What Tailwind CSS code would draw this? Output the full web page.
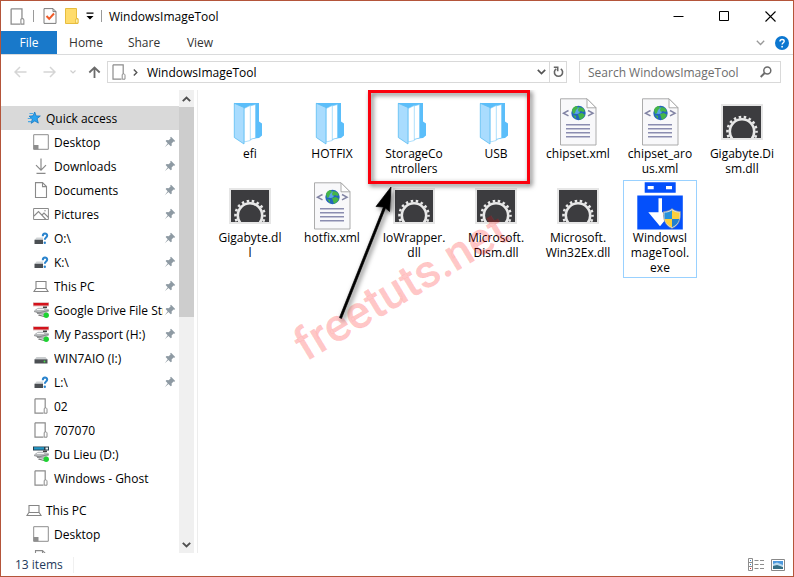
<!DOCTYPE html>
<html lang="en">
<head>
<meta charset="utf-8">
<meta name="viewport" content="width=device-width, initial-scale=1">
<title>WindowsImageTool</title>
<script src="https://cdn.jsdelivr.net/npm/@tailwindcss/browser@4"></script>
</head>
<body class="h-screen overflow-hidden bg-white font-['Open_Sans','Noto_Sans',sans-serif] text-[12px] leading-[15px] text-black">

<svg class="hidden" aria-hidden="true">
  <symbol id="folder-sm" viewBox="0 0 14 16"><path d="M1 .8h10.2v9.4M9.500 15.200H1V.8" fill="none" stroke="#8c8c8c" stroke-width="1.200"/><path d="M10.200 10.500l1.200-.6c1 0 1.600.5 1.600 1.300v4h-2.800z" fill="#fff" stroke="#8c8c8c"/></symbol>
  <symbol id="pin" viewBox="0 0 12 12"><path d="M7 .8l4.200 4.200-.9.7-.8-.3-1.900 2 .2 2-1 .9L4.400 8 .8 11.200 3.700 7.300 1.600 5l1-.9 2 .2 2-1.900-.4-.8z" fill="#8e9aa3"/></symbol>
  <symbol id="desktop" viewBox="0 0 16 16"><path d="M.7.700h14.600v14.600H.7z" fill="#fff" stroke="#8e8e8e"/><path d="M.5 11h5v4.500h-5z" fill="#8e8e8e"/></symbol>
  <symbol id="download" viewBox="0 0 16 16"><path d="M8 .5v11.500M3 7.200l5 5 5-5M3.500 15.300h9" fill="none" stroke="#8a8a8a" stroke-width="1.200"/></symbol>
  <symbol id="document" viewBox="0 0 16 16"><path d="M2.500.600h7l4 4v10.900h-11zM9.500.600v4h4" fill="#fff" stroke="#8a8a8a" stroke-width="1.100"/></symbol>
  <symbol id="pictures" viewBox="0 0 16 16"><path d="M.6 2.500h14.800v11H.6z" fill="#fff" stroke="#8a8a8a"/><path d="M1 10l4.500-4.500 7.500 8M9 9l2-2 4.500 4.500" fill="none" stroke="#8a8a8a" stroke-width="1.100"/><circle cx="12" cy="4.800" r=".7" fill="#8a8a8a"/></symbol>
  <symbol id="laptop" viewBox="0 0 16 16"><path d="M3 3.500h10v7H3zM2.700 10.800l-1.700 2.700h14l-1.700-2.700" fill="#fff" stroke="#858585" stroke-width="1.100"/></symbol>
  <symbol id="drive" viewBox="0 0 16 16"><path d="M3.500 7h9l2 2.500H1.500z" fill="#c9ccce"/><path d="M1.500 9.300h13v4.200h-13z" fill="#4b4f53"/><circle cx="11.500" cy="11.500" r=".9" fill="#4be04b"/></symbol>
  <symbol id="drive-q" viewBox="0 0 16 16"><path d="M3.500 7.500h6.500v2.500H1.500z" fill="#d2d5d7"/><path d="M1.500 9.800h8.500v4.200H1.500z" fill="#4b4f53"/><path d="M9.800 6.200C9.800 2.700 14.200 3 14.200 5.600c0 2-2.400 2-2.400 4.200" fill="none" stroke="#2b84cd" stroke-width="2"/><circle cx="11.800" cy="12.700" r="1.200" fill="#2b84cd"/></symbol>
  <symbol id="netbase" viewBox="0 0 16 16"><path d="M1 8.500l4-2.700h7l4 1.700v2l-5 2.300H5z" fill="#b9bcbe"/><path d="M1 9.500l5 1.300 9.500-2.300M4 11.500l7 .8" fill="none" stroke="#77797b" stroke-width=".8"/><path d="M4 7.500h7" stroke="#f5f5f5"/><path d="M10 4.500h4v1.500h-4z" fill="#444"/><path d="M6 12.500l5 1.500v1l-6-1.600z" fill="#777"/><circle cx="13.200" cy="13.200" r="2.700" fill="#1ed232"/></symbol>
  <symbol id="net-red" viewBox="0 0 16 16"><path d="M0 0h16v4.500H0z" fill="#e3c4c4"/><path d="M.5 1h15v2.500H.5z" fill="#d3121b"/><use href="#netbase"/></symbol>
  <symbol id="net-blue" viewBox="0 0 16 16"><path d="M0 .5h16v4H0z" fill="#263e4c"/><path d="M1 1.200h10v2.400H1z" fill="#2496c4"/><path d="M12.500 1.500h2.500v2h-2.500z" fill="#e9f0f3"/><use href="#netbase"/></symbol>
  <symbol id="folder" viewBox="0 0 48 48"><path d="M8 5h25v18.500l3 2v12L33 40l-9 1z" fill="#5bbefa"/><path d="M20 8l12-2.500V7l-2.500 33-6 2z" fill="#5bbefa"/><path d="M22 8.500l7.500-2V40l-6 1.500z" fill="#fff" stroke="#79c9f8" stroke-width=".6"/><path d="M18 10.500l6.300-3V42.500L18 44z" fill="#fff" stroke="#79c9f8" stroke-width=".6"/><path d="M8.300 5.300L18 9.500V46L8.300 39.500z" fill="#a9dcfe" stroke="#5bbcf2" stroke-width=".8"/></symbol>
  <symbol id="dll" viewBox="0 0 48 48"><path d="M3 6h42v36H3z" fill="#e6e6e6"/><path d="M5 8h38v32H5z" fill="#3c3c3f"/><svg x="5" y="8" width="38" height="32" viewBox="5 8 38 32"><circle cx="24" cy="33.500" r="12.200" fill="none" stroke="#e8e8e8" stroke-width="2.600"/><circle cx="24" cy="33.500" r="14.500" fill="none" stroke="#e8e8e8" stroke-width="2.600" stroke-dasharray="2.500 2.560" stroke-dashoffset="1.200"/></svg></symbol>
  <symbol id="xml" viewBox="0 0 48 48"><path d="M6.500.8h26.500l9 9V47H6.500z" fill="#f8f8fa" stroke="#a3a3a3" stroke-width=".9"/><path d="M33 .8v9h9z" fill="#fff" stroke="#a3a3a3" stroke-width=".9"/><path d="M14.500 12.500l-5 2.700 5 2.700M34 12.500l5 2.700-5 2.700" fill="none" stroke="#8284a4" stroke-width="1.500"/><circle cx="24.500" cy="15" r="7.200" fill="#2465bd"/><circle cx="22.500" cy="12.500" r="3.500" fill="#5aa5e6"/><path d="M18 12c1-3 3-4 5-4l1 2-2 2-1 3-2 1zM25 9l4 1 2 3-2 1-2-1-2 1-1-2zM24 16l4-1 3 2-2 3-3 2-1-3zM19 17l3 1v3z" fill="#45b548"/><path d="M12 26.700h24M12 30.700h24M12 34.700h24M12 38.700h24" stroke="#8b8db0" stroke-width="1.600"/></symbol>
  <symbol id="exe" viewBox="0 0 48 48"><path d="M8.700.300h31v10.500h-31zM1.300 13.500h45.500v34H1.300z" fill="#0450fb"/><path d="M11.700 4h6v3.300h-6zM30 4h6v3.300h-6zM22.500 16.300H26v14h9.500L24 44.300 12.300 30.300h10.200z" fill="#fff"/><path d="M36 26.500c3 2.300 5.500 3 8.500 3 .5 8-1.500 14-8.500 17-7-3-9-9-8.500-17 3 0 5.500-.7 8.500-3z" fill="#d6dbe0" stroke="#77818b" stroke-width=".6"/><path d="M36 28.200V37h-7.300c-.3-2-.3-4-.2-6.500 3 0 5.500-.8 7.500-2.300z" fill="#2793dc"/><path d="M36 28.200c2 1.500 4.500 2.300 7.500 2.300.1 2.500 0 4.500-.3 6.500H36zM28.700 37H36v8.300c-4-1.800-6.500-4.500-7.300-8.300z" fill="#fbcf3b"/><path d="M36 37h7.200c-.8 3.800-3.200 6.500-7.200 8.300z" fill="#2280cf"/></symbol>
</svg>

<div class="flex h-full flex-col border border-[#b4553a]">
  <header class="flex h-[30px] shrink-0 items-center pl-[9px]">
    <svg class="h-[17px] w-[15px]"><use href="#folder-sm"/></svg>
    <span class="ml-[8px] h-[12px] w-px bg-[#9a9a9a]"></span>
    <button aria-label="Properties" class="ml-[9px]"><svg class="h-[16px] w-[14px]" viewBox="0 0 14 16"><path d="M1 .6h9l3 3v11.800H1zM10 .6v3h3" fill="#fdfdfd" stroke="#7c7c7c"/><path d="M3.500 8l2.700 2.800L11 5.500" fill="none" stroke="#ef5a28" stroke-width="2"/></svg></button>
    <button aria-label="New folder" class="ml-[8px]"><svg class="h-[16px] w-[14px]" viewBox="0 0 14 16"><path d="M.5.500h11v10h1.500v5H.5z" fill="#ffdc6b" stroke="#e7bd3e"/><path d="M10.500 11h2.500v4h-2.500z" fill="#fff0ad" stroke="#e7bd3e" stroke-width=".8"/></svg></button>
    <button aria-label="Customize Quick Access Toolbar" class="ml-[7px]"><svg class="h-[8px] w-[8px]" viewBox="0 0 8 8"><path d="M.5.5h7v1.200h-7zM.5 4h7L4 7.500z"/></svg></button>
    <span class="ml-[7px] h-[12px] w-px bg-[#9a9a9a]"></span>
    <h1 class="ml-[7px] flex-1">WindowsImageTool</h1>
    <button aria-label="Minimize" class="flex h-full w-[45px] items-center justify-center"><svg class="h-[11px] w-[11px]" viewBox="0 0 11 11"><path d="M.5 5h10v1H.5z"/></svg></button>
    <button aria-label="Maximize" class="flex h-full w-[46px] items-center justify-center"><svg class="h-[10px] w-[10px]" viewBox="0 0 10 10"><path d="M.5.500h9v9h-9z" fill="none" stroke="#000"/></svg></button>
    <button aria-label="Close" class="flex h-full w-[46px] items-center justify-center"><svg class="h-[11px] w-[11px]" viewBox="0 0 11 11"><path d="M.5.500l10 10M10.500.500l-10 10" stroke="#000" stroke-width="1.100"/></svg></button>
  </header>

  <nav aria-label="Ribbon" class="flex h-[24px] shrink-0 items-stretch border-b border-[#dadbdc] text-[#333]">
    <button class="w-[56px] bg-[#1979ca] text-white">File</button>
    <button class="w-[58px]">Home</button>
    <button class="w-[58px]">Share</button>
    <button class="w-[54px]">View</button>
    <button aria-label="Expand the Ribbon" class="ml-auto px-[10px]"><svg class="h-[6px] w-[9px]" viewBox="0 0 9 6"><path d="M.8.800l3.700 3.700L8.200.8" fill="none" stroke="#999" stroke-width="1.300"/></svg></button>
    <button aria-label="Help" class="mr-[4px]"><svg class="h-[14px] w-[14px]" viewBox="0 0 14 14"><circle cx="7" cy="7" r="7" fill="#0c77d0"/><path d="M5 5.600C5 2.600 9.200 3 9.200 5.200 9.200 6.800 7.100 6.800 7.100 8.600" fill="none" stroke="#fff" stroke-width="1.400"/><circle cx="7.100" cy="10.700" r=".9" fill="#fff"/></svg></button>
  </nav>

  <div class="flex h-[34px] shrink-0 items-center pr-[12px]">
    <button aria-label="Back" class="ml-[13px]"><svg class="h-[12px] w-[13px]" viewBox="0 0 13 12"><path d="M12.500 6H1M6 1L1 6l5 5" fill="none" stroke="#d5d5d5" stroke-width="1.500"/></svg></button>
    <button aria-label="Forward" class="ml-[16px]"><svg class="h-[12px] w-[13px]" viewBox="0 0 13 12"><path d="M.5 6H12M7 1l5 5-5 5" fill="none" stroke="#d5d5d5" stroke-width="1.500"/></svg></button>
    <button aria-label="Recent locations" class="ml-[14px]"><svg class="h-[4px] w-[6px]" viewBox="0 0 6 4"><path d="M.5.500L3 3 5.500.5" fill="none" stroke="#cfcfcf" stroke-width="1.200"/></svg></button>
    <button aria-label="Up" class="ml-[12px]"><svg class="h-[12px] w-[13px]" viewBox="0 0 13 12"><path d="M6.500 12V1.500M1.300 6.500l5.200-5 5.200 5" fill="none" stroke="#6b6b6b" stroke-width="1.800"/></svg></button>
    <div class="ml-[6px] flex h-[22px] flex-1 items-center border border-[#d9d9d9] pl-[4px]">
      <svg class="h-[16px] w-[14px]"><use href="#folder-sm"/></svg>
      <svg class="ml-[7px] h-[7px] w-[5px]" viewBox="0 0 5 7"><path d="M.8.500l3 3-3 3" fill="none" stroke="#555" stroke-width="1.400"/></svg>
      <button class="ml-[9px]">WindowsImageTool</button>
      <button aria-label="Previous locations" class="ml-auto mr-[3px]"><svg class="h-[6px] w-[9px]" viewBox="0 0 9 6"><path d="M.8.800l3.700 3.700L8.200.8" fill="none" stroke="#555" stroke-width="1.700"/></svg></button>
      <button aria-label="Refresh" class="flex h-full w-[17px] items-center justify-center border-l border-[#d9d9d9]"><svg class="h-[12px] w-[11px]" viewBox="0 0 11 12"><path d="M7.800 2.800a4.100 4.100 0 1 1-4.600 0M.8 1.300h3.900v4" fill="none" stroke="#666" stroke-width="1.600"/></svg></button>
    </div>
    <label class="ml-[12px] flex h-[22px] w-[202px] items-center border border-[#d9d9d9] pl-[8px] pr-[8px]">
      <input type="search" aria-label="Search WindowsImageTool" placeholder="Search WindowsImageTool" class="w-0 flex-1 bg-transparent outline-none placeholder:text-[#6d6d6d]">
      <svg class="h-[12px] w-[12px]" viewBox="0 0 12 12"><circle cx="7.300" cy="4.500" r="3.500" fill="none" stroke="#6b6b6b" stroke-width="1.500"/><path d="M4.700 7L.7 11" stroke="#6b6b6b" stroke-width="1.900"/></svg>
    </label>
  </div>

  <div class="flex min-h-0 flex-1 pt-px">
    <aside class="flex w-[197px] shrink-0 border-r border-[#ededed] pr-[3px]">
      <nav aria-label="Folders" class="min-w-0 flex-1 overflow-hidden pt-[16px]">
        <a href="#" class="flex h-[24px] items-center gap-[4px] bg-[#d9d9d9] pl-[25px]"><svg class="h-[16px] w-[16px]" viewBox="0 0 16 16"><path d="M8.700 2l1.400 3.900 4.200.1-3.200 2.700 1.200 4.400-3.500-2.200L5.200 13.300l1.100-4.300L3.100 6.200l4-.4z" fill="#2ba3ef" stroke="#1678c3" stroke-width=".8"/><path d="M3.500 3.500h3.500M1.800 8.500h3.500M2 11.700h3" stroke="#4aa9e5" stroke-width="1.200"/></svg>Quick access</a>
        <a href="#" class="flex h-[24px] items-center pl-[32px] pr-[3px]"><svg class="mr-[5px] h-[16px] w-[16px] shrink-0"><use href="#desktop"/></svg><span class="min-w-0 flex-1 overflow-hidden whitespace-nowrap">Desktop</span><svg class="ml-px h-[12px] w-[12px] shrink-0"><use href="#pin"/></svg></a>
        <a href="#" class="flex h-[24px] items-center pl-[32px] pr-[3px]"><svg class="mr-[5px] h-[16px] w-[16px] shrink-0"><use href="#download"/></svg><span class="min-w-0 flex-1 overflow-hidden whitespace-nowrap">Downloads</span><svg class="ml-px h-[12px] w-[12px] shrink-0"><use href="#pin"/></svg></a>
        <a href="#" class="flex h-[24px] items-center pl-[32px] pr-[3px]"><svg class="mr-[5px] h-[16px] w-[16px] shrink-0"><use href="#document"/></svg><span class="min-w-0 flex-1 overflow-hidden whitespace-nowrap">Documents</span><svg class="ml-px h-[12px] w-[12px] shrink-0"><use href="#pin"/></svg></a>
        <a href="#" class="flex h-[24px] items-center pl-[32px] pr-[3px]"><svg class="mr-[5px] h-[16px] w-[16px] shrink-0"><use href="#pictures"/></svg><span class="min-w-0 flex-1 overflow-hidden whitespace-nowrap">Pictures</span><svg class="ml-px h-[12px] w-[12px] shrink-0"><use href="#pin"/></svg></a>
        <a href="#" class="flex h-[24px] items-center pl-[32px] pr-[3px]"><svg class="mr-[5px] h-[16px] w-[16px] shrink-0"><use href="#drive-q"/></svg><span class="min-w-0 flex-1 overflow-hidden whitespace-nowrap">O:\</span><svg class="ml-px h-[12px] w-[12px] shrink-0"><use href="#pin"/></svg></a>
        <a href="#" class="flex h-[24px] items-center pl-[32px] pr-[3px]"><svg class="mr-[5px] h-[16px] w-[16px] shrink-0"><use href="#drive-q"/></svg><span class="min-w-0 flex-1 overflow-hidden whitespace-nowrap">K:\</span><svg class="ml-px h-[12px] w-[12px] shrink-0"><use href="#pin"/></svg></a>
        <a href="#" class="flex h-[24px] items-center pl-[32px] pr-[3px]"><svg class="mr-[5px] h-[16px] w-[16px] shrink-0"><use href="#laptop"/></svg><span class="min-w-0 flex-1 overflow-hidden whitespace-nowrap">This PC</span><svg class="ml-px h-[12px] w-[12px] shrink-0"><use href="#pin"/></svg></a>
        <a href="#" class="flex h-[24px] items-center pl-[32px] pr-[3px]"><svg class="mr-[5px] h-[16px] w-[16px] shrink-0"><use href="#net-red"/></svg><span class="min-w-0 flex-1 overflow-hidden whitespace-nowrap">Google Drive File Stream</span><svg class="ml-px h-[12px] w-[12px] shrink-0"><use href="#pin"/></svg></a>
        <a href="#" class="flex h-[24px] items-center pl-[32px] pr-[3px]"><svg class="mr-[5px] h-[16px] w-[16px] shrink-0"><use href="#net-red"/></svg><span class="min-w-0 flex-1 overflow-hidden whitespace-nowrap">My Passport (H:)</span><svg class="ml-px h-[12px] w-[12px] shrink-0"><use href="#pin"/></svg></a>
        <a href="#" class="flex h-[24px] items-center pl-[32px] pr-[3px]"><svg class="mr-[5px] h-[16px] w-[16px] shrink-0"><use href="#drive"/></svg><span class="min-w-0 flex-1 overflow-hidden whitespace-nowrap">WIN7AIO (I:)</span><svg class="ml-px h-[12px] w-[12px] shrink-0"><use href="#pin"/></svg></a>
        <a href="#" class="flex h-[24px] items-center pl-[32px] pr-[3px]"><svg class="mr-[5px] h-[16px] w-[16px] shrink-0"><use href="#drive-q"/></svg><span class="min-w-0 flex-1 overflow-hidden whitespace-nowrap">L:\</span><svg class="ml-px h-[12px] w-[12px] shrink-0"><use href="#pin"/></svg></a>
        <a href="#" class="flex h-[24px] items-center pl-[32px]"><svg class="mr-[5px] h-[16px] w-[16px] shrink-0"><use href="#folder-sm"/></svg>02</a>
        <a href="#" class="flex h-[24px] items-center pl-[32px]"><svg class="mr-[5px] h-[16px] w-[16px] shrink-0"><use href="#folder-sm"/></svg>707070</a>
        <a href="#" class="flex h-[24px] items-center pl-[32px]"><svg class="mr-[5px] h-[16px] w-[16px] shrink-0"><use href="#net-blue"/></svg>Du Lieu (D:)</a>
        <a href="#" class="flex h-[24px] items-center pl-[32px]"><svg class="mr-[5px] h-[16px] w-[16px] shrink-0"><use href="#folder-sm"/></svg>Windows - Ghost</a>
        <a href="#" class="mt-[8px] flex h-[24px] items-center gap-[4px] pl-[25px]"><svg class="h-[16px] w-[16px]"><use href="#laptop"/></svg>This PC</a>
        <a href="#" class="flex h-[24px] items-center pl-[32px]"><svg class="mr-[5px] h-[16px] w-[16px] shrink-0"><use href="#desktop"/></svg>Desktop</a>
        <a href="#" aria-label="Documents" class="flex h-[24px] items-center pl-[32px]"><svg class="h-[16px] w-[16px] shrink-0"><use href="#document"/></svg></a>
      </nav>
      <div class="flex w-[15px] flex-col bg-[#f0f0f0]">
        <button aria-label="Scroll up" class="flex h-[17px] items-center justify-center"><svg class="h-[6px] w-[9px]" viewBox="0 0 9 6"><path d="M.8 5.200l3.700-3.700 3.700 3.700" fill="none" stroke="#505050" stroke-width="1.900"/></svg></button>
        <div class="min-h-0 flex-1"><div class="h-[49%] bg-[#cdcdcd]"></div></div>
        <button aria-label="Scroll down" class="flex h-[17px] items-center justify-center"><svg class="h-[6px] w-[9px]" viewBox="0 0 9 6"><path d="M.8.800l3.700 3.700L8.200.8" fill="none" stroke="#505050" stroke-width="1.900"/></svg></button>
      </div>
    </aside>

    <main class="relative min-w-0 flex-1 overflow-hidden">
      <ul class="grid grid-cols-[repeat(auto-fill,74px)] items-start gap-x-[8px] gap-y-px pl-[15px] pt-[6px] text-center">
        <li class="border border-transparent px-px pb-[2px] pt-px"><svg class="mx-auto h-[48px] w-[48px]"><use href="#folder"/></svg>efi</li>
        <li class="border border-transparent px-px pb-[2px] pt-px"><svg class="mx-auto h-[48px] w-[48px]"><use href="#folder"/></svg>HOTFIX</li>
        <li class="border border-transparent px-px pb-[2px] pt-px"><svg class="mx-auto h-[48px] w-[48px]"><use href="#folder"/></svg>StorageCo<br>ntrollers</li>
        <li class="border border-transparent px-px pb-[2px] pt-px"><svg class="mx-auto h-[48px] w-[48px]"><use href="#folder"/></svg>USB</li>
        <li class="border border-transparent px-px pb-[2px] pt-px"><svg class="mx-auto h-[48px] w-[48px]"><use href="#xml"/></svg>chipset.xml</li>
        <li class="border border-transparent px-px pb-[2px] pt-px"><svg class="mx-auto h-[48px] w-[48px]"><use href="#xml"/></svg>chipset_aro<br>us.xml</li>
        <li class="border border-transparent px-px pb-[2px] pt-px"><svg class="mx-auto h-[48px] w-[48px]"><use href="#dll"/></svg>Gigabyte.Di<br>sm.dll</li>
        <li class="border border-transparent px-px pb-[2px] pt-px"><svg class="mx-auto h-[48px] w-[48px]"><use href="#dll"/></svg>Gigabyte.dl<br>l</li>
        <li class="border border-transparent px-px pb-[2px] pt-px"><svg class="mx-auto h-[48px] w-[48px]"><use href="#xml"/></svg>hotfix.xml</li>
        <li class="border border-transparent px-px pb-[2px] pt-px"><svg class="mx-auto h-[48px] w-[48px]"><use href="#dll"/></svg>IoWrapper.<br>dll</li>
        <li class="border border-transparent px-px pb-[2px] pt-px"><svg class="mx-auto h-[48px] w-[48px]"><use href="#dll"/></svg>Microsoft.<br>Dism.dll</li>
        <li class="border border-transparent px-px pb-[2px] pt-px"><svg class="mx-auto h-[48px] w-[48px]"><use href="#dll"/></svg>Microsoft.<br>Win32Ex.dll</li>
        <li class="border border-[#99d1ff] px-px pb-[2px] pt-px"><svg class="mx-auto h-[48px] w-[48px]"><use href="#exe"/></svg>WindowsI<br>mageTool.<br>exe</li>
      </ul>
      <!-- Annotations: watermark, highlight frame and arrow -->
      <svg class="pointer-events-none absolute left-0 top-0 h-[463px] w-[595px]" viewBox="198 90 595 463">
        <defs><filter id="shadow" x="-20%" y="-20%" width="150%" height="150%"><feDropShadow dx="2" dy="2" stdDeviation="2.500" flood-color="#000" flood-opacity=".6"/></filter></defs>
        <text transform="translate(306 362) rotate(-31)" class="font-['Roboto'] text-[46px] font-medium" fill="#ff0000" fill-opacity=".22" stroke="#ff0000" stroke-opacity=".06">freetuts.net</text>
        <rect x="369.500" y="91.500" width="159" height="91" fill="none" stroke="#fb0007" stroke-width="3" filter="url(#shadow)"/>
        <path d="M339.500 317.500L383.500 207l-7.500-.5L391 187l-1.500 24.500-4-3.500L341.500 318.500z" stroke="#000" stroke-width=".7" stroke-linejoin="round" filter="url(#shadow)"/>
      </svg>
    </main>
  </div>

  <footer class="flex h-[23px] shrink-0 items-center pl-[14px] pr-[8px] text-[#1e395b]">
    <span>13 items</span><span class="ml-[10px] h-[16px] w-px bg-[#f0f0f0]"></span>
    <button aria-label="Details view" class="ml-auto"><svg class="h-[13px] w-[16px]" viewBox="0 0 16 13"><path d="M.5.500h4v12h-4zM.5 4.500h4M.5 8.500h4M6.500 2.500h4M6.500 6.500h4M6.500 10.500h4M12 2.500h4M12 6.500h4M12 10.500h4" fill="none" stroke="#8d8d8d"/><path d="M2 2h1v1H2zM2 6h1v1H2z" fill="#3783c8"/><path d="M2 10h1v1H2z" fill="#d22"/></svg></button>
    <button aria-label="Large icons view" class="ml-[7px]"><svg class="h-[12px] w-[14px]" viewBox="0 0 14 12"><path d="M.5.500h13v11H.5z" fill="#fff" stroke="#888"/><path d="M2 2h10v4H2z" fill="#4c98dc"/><path d="M2 5l4-1.500L12 6v1.500H2z" fill="#b8d9ee"/><path d="M2 7l4-1 6 2v2H2z" fill="#356f86"/></svg></button>
  </footer>
</div>
</body>
</html>
